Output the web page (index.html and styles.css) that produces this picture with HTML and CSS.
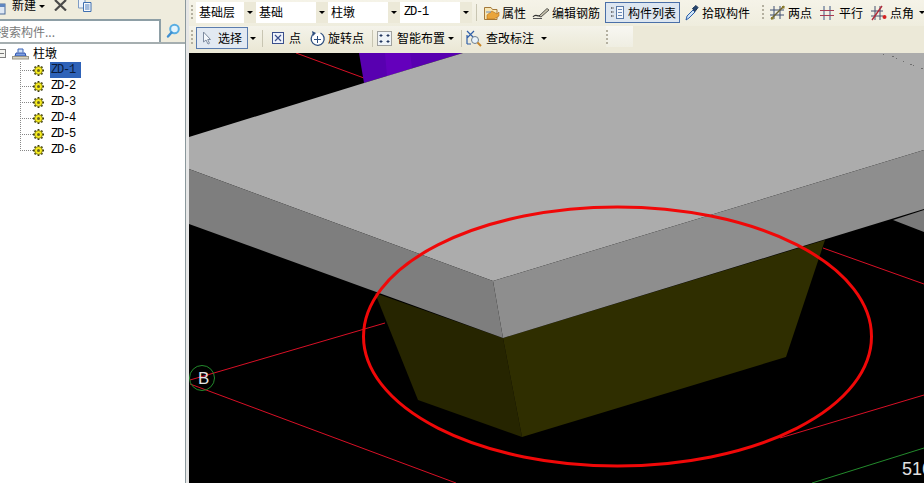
FILE: index.html
```html
<!DOCTYPE html>
<html lang="zh">
<head>
<meta charset="utf-8">
<title>柱墩</title>
<link rel="stylesheet" href="styles.css">
</head>
<body>
<div class="app">
  <aside class="panel">
    <div class="panel-bar">
      <svg class="i-new" width="6" height="12" viewBox="0 0 6 12"><rect x="-6" y="1" width="11" height="10" fill="#dfe8f4" stroke="#4a6a9a"/><rect x="-6" y="1" width="11" height="3" fill="#5f86c0"/></svg>
      <span class="new-label">新建</span>
      <span class="caret caret-new"></span>
      <svg class="i-x" width="13" height="11" viewBox="0 0 13 11"><path d="M1 0L12 10.500M12 0L1 10.500" stroke="#4a4a4a" stroke-width="2.200" fill="none"/></svg>
      <svg class="i-copy" width="15" height="12" viewBox="0 0 15 12"><path d="M1.500 -1H8V8H1.500Z" fill="#eef3fa" stroke="#7f9cc4"/><path d="M6.500 2.500H14V11.500H6.500Z" fill="#f6f9fd" stroke="#3f6fb0"/><path d="M8 5H12.500M8 7H12.500M8 9H12.500" stroke="#4d7dbd"/></svg>
    </div>
    <div class="search">
      <div class="search-input"><span class="search-text">搜索构件...</span></div>
      <div class="search-btn">
        <svg width="15" height="15" viewBox="0 0 15 15"><circle cx="8.500" cy="6" r="4.300" fill="#e4f4fd" stroke="#5aaee2" stroke-width="2"/><path d="M5.500 9.500L2 13.500" stroke="#3f8fd0" stroke-width="2.400" stroke-linecap="round"/></svg>
      </div>
    </div>
    <div class="tree">
      <div class="tree-root">
        <span class="expander"></span>
        <svg class="root-icon" width="17" height="13" viewBox="0 0 17 13"><path d="M6 5.500V2H11V5.500" fill="#cfe0f6" stroke="#3a62b8"/><path d="M4 6H13L14 9H3Z" fill="#7e9fe0" stroke="#2f55ad"/><rect x="0.500" y="9.500" width="16" height="2.500" fill="#d8d4c4" stroke="#9a9686"/></svg>
        <span class="root-label">柱墩</span>
      </div>
      <ul class="tree-list">
        <li class="tree-item"><span class="connector"></span><svg class="gear" viewBox="0 0 11 11"><use href="#gear"/></svg><span class="code code-on">ZD-1</span></li>
        <li class="tree-item"><span class="connector"></span><svg class="gear" viewBox="0 0 11 11"><use href="#gear"/></svg><span class="code">ZD-2</span></li>
        <li class="tree-item"><span class="connector"></span><svg class="gear" viewBox="0 0 11 11"><use href="#gear"/></svg><span class="code">ZD-3</span></li>
        <li class="tree-item"><span class="connector"></span><svg class="gear" viewBox="0 0 11 11"><use href="#gear"/></svg><span class="code">ZD-4</span></li>
        <li class="tree-item"><span class="connector"></span><svg class="gear" viewBox="0 0 11 11"><use href="#gear"/></svg><span class="code">ZD-5</span></li>
        <li class="tree-item"><span class="connector"></span><svg class="gear" viewBox="0 0 11 11"><use href="#gear"/></svg><span class="code">ZD-6</span></li>
      </ul>
    </div>
  </aside>

  <main class="work">
    <div class="toolbars">
      <div class="row row-one">
        <span class="grip grip-first"></span>
        <div class="combo combo-a"><span class="combo-text">基础层</span><span class="combo-arrow"><span class="caret"></span></span></div>
        <div class="combo combo-b"><span class="combo-text">基础</span><span class="combo-arrow"><span class="caret"></span></span></div>
        <div class="combo combo-b"><span class="combo-text">柱墩</span><span class="combo-arrow"><span class="caret"></span></span></div>
        <div class="combo combo-b"><span class="combo-text code-text">ZD-1</span><span class="combo-arrow"><span class="caret"></span></span></div>
        <span class="sep sep-a"></span>
        <div class="tool tool-prop">
          <svg width="17" height="16" viewBox="0 0 17 16"><path d="M1.500 2.500H8L9.500 4.500H14V14.500H1.500Z" fill="#f7e6b4" stroke="#a5793a"/><path d="M4 10L9 6L14 9L16 7V11L11 14H4Z" fill="#eaa53a" stroke="#b3701c" stroke-width=".6"/><path d="M3 7H8" stroke="#6f8fc0"/></svg>
          <span>属性</span>
        </div>
        <div class="tool tool-rebar">
          <svg width="18" height="14" viewBox="0 0 18 14"><path d="M1 11C4 7 6 12 9 9" stroke="#333" fill="none" stroke-width="1.200"/><path d="M7 10L15 2.500L17 4L9 11Z" fill="#c9c4ae" stroke="#333" stroke-width=".8"/><path d="M1 12.500H10" stroke="#555"/></svg>
          <span>编辑钢筋</span>
        </div>
        <div class="tool tool-list">
          <svg width="14" height="15" viewBox="0 0 14 15"><path d="M1 3H4M1 7H4M1 11H4" stroke="#555" stroke-width="1.600" stroke-dasharray="1.500 1"/><rect x="6.500" y="1.500" width="7" height="12" fill="#f4f7fb" stroke="#5a7aa8"/><path d="M8 4.500H12M8 7.500H12M8 10.500H12" stroke="#6a8ab8"/></svg>
          <span>构件列表</span>
        </div>
        <div class="tool tool-pick">
          <svg width="14" height="17" viewBox="0 0 14 17"><path d="M1 16L2 12L8 6L10 8L4 14Z" fill="#cfe4f7" stroke="#2c5ea8"/><path d="M7.500 4.500L11 1.500L13 3.500L10 7.500Z" fill="#27466f" stroke="#1c3454"/></svg>
          <span>拾取构件</span>
        </div>
        <span class="grip grip-mid"></span>
        <div class="tool tool-two">
          <svg width="15" height="15" viewBox="0 0 15 15"><path d="M4 1V14M10 1V14M0 5H14M0 10H14" stroke="#3e4f72"/><path d="M1 14L14 1" stroke="#6d6333" stroke-width="1.400"/><rect x="12" y="1" width="2.500" height="2.500" fill="#8a7a2a"/><rect x="1" y="12" width="2.500" height="2.500" fill="#8a7a2a"/></svg>
          <span>两点</span>
        </div>
        <div class="tool tool-par">
          <svg width="14" height="14" viewBox="0 0 14 14"><path d="M4 0V14M10 0V14" stroke="#3f5684"/><path d="M0 4.500H14M0 9.500H14" stroke="#a83a52"/></svg>
          <span>平行</span>
        </div>
        <div class="tool tool-ang">
          <svg width="16" height="16" viewBox="0 0 16 16"><path d="M4 1V15M9 1V15M0 6H12M0 11H12" stroke="#49506e"/><path d="M1 15L11 1" stroke="#b02a3a" stroke-width="1.400"/><circle cx="13.500" cy="12" r="2" fill="#d42020"/></svg>
          <span>点角</span>
        </div>
        <span class="caret caret-end"></span>
      </div>
      <div class="row row-two">
        <div class="strip">
          <span class="grip grip-first"></span>
          <div class="tool tool-select">
            <svg width="10" height="14" viewBox="0 0 10 14"><path d="M1.500 1V11L4 9L6 13L7.500 12.300L5.700 8.500H8.500Z" fill="#f4f8fc" stroke="#7f8ca0"/></svg>
            <span>选择</span>
          </div>
          <span class="caret caret-sel"></span>
          <span class="sep sep-b"></span>
          <div class="tool tool-point">
            <svg width="12" height="12" viewBox="0 0 12 12"><rect x=".5" y=".5" width="11" height="11" fill="#eef2fa" stroke="#3a4f8c"/><path d="M3 3L9 9M9 3L3 9" stroke="#3a4f8c" stroke-width="1.200"/></svg>
            <span>点</span>
          </div>
          <div class="tool tool-rot">
            <svg width="17" height="17" viewBox="0 0 17 17"><path d="M5 3.500A6.500 6.500 0 1 0 11.500 3" fill="#fff" stroke="#2f4f7f" stroke-width="1.300"/><path d="M3 1L7 3L4 6Z" fill="#2f4f7f"/><path d="M8.500 6V13M5 9.500H12" stroke="#2f4f7f"/></svg>
            <span>旋转点</span>
          </div>
          <span class="sep sep-c"></span>
          <div class="tool tool-smart">
            <svg width="15" height="15" viewBox="0 0 15 15"><rect x=".5" y=".5" width="14" height="14" fill="#eef3f8" stroke="#555" stroke-dasharray="1 1"/><path d="M4 3V6M2.500 4.500H5.500M11 3V6M9.500 4.500H12.500M4 9V12M2.500 10.500H5.500M11 9V12M9.500 10.500H12.500" stroke="#22365f"/></svg>
            <span>智能布置</span>
          </div>
          <span class="caret caret-smart"></span>
          <span class="sep sep-d"></span>
          <div class="tool tool-check">
            <svg width="17" height="17" viewBox="0 0 17 17"><path d="M2 1L9 8M9 1L2 8M2 5V14M2 14H6" stroke="#2f5fa8" stroke-width="1.200" fill="none"/><circle cx="10" cy="10" r="3.500" fill="#e8f3fb" stroke="#6f8090"/><path d="M12.500 12.500L16 16" stroke="#c8862a" stroke-width="2"/></svg>
            <span>查改标注</span>
          </div>
          <span class="caret caret-check"></span>
        </div>
        <div class="overflow"><span class="grip grip-over"></span></div>
      </div>
    </div>
    <svg class="scene" viewBox="189 53 735 430" preserveAspectRatio="none">
      <rect x="189" y="53" width="735" height="430" fill="#000"/>
      <path d="M296 53L364 78" class="red-thin"/>
      <path d="M359 53L364 83L463 53Z" fill="#5800b0"/>
      <path d="M385 53L387 76L412 68L410 53Z" fill="#6400bc"/>
      <path d="M190 380L385 323" class="red-thin"/>
      <path d="M190 384L456 483" class="red-thin"/>
      <path d="M823 248L924 284" class="red-thin"/>
      <path d="M780 438L924 395" class="red-thin"/>
      <path d="M812 483L924 448" class="green-thin"/>
      <circle cx="202" cy="378" r="12.500" class="green-thin"/>
      <path d="M375 293L418 400L522 437L503 338Z" fill="#262500"/>
      <path d="M503 338L522 437L786 357L825 240Z" fill="#2f2e00"/>
      <path d="M893 220L924 210V232Z" fill="#7a7a7a"/>
      <path d="M189 137L364 83L463 53H924V150L493 281L189 169Z" fill="#acacac"/>
      <path d="M189 169L493 281L503 338L189 224Z" fill="#7e7e7e"/>
      <path d="M493 281L924 150V209L503 338Z" fill="#8e8e8e"/>
      <path d="M883 54h1v1h-1zM892 56h2v1h-2zM896 58h1v1h-1zM903 61h1v1h-1zM910 64h2v1h-2zM913 65h1v1h-1zM921 68h2v1h-2z" fill="#6e6e6e"/>
      <ellipse cx="617.500" cy="336.500" rx="254" ry="129.500" class="mark"/>
      <text x="198" y="384" class="axis">B</text>
      <text x="902" y="475" class="coord">516</text>
    </svg>
  </main>
</div>
<svg class="defs" width="0" height="0">
  <symbol id="gear" viewBox="0 0 11 11">
    <path d="M5.500 0V11M0 5.500H11M1.600 1.600L9.400 9.400M9.400 1.600L1.600 9.400" stroke="#3a3a10" stroke-width="1.800"/>
    <circle cx="5.500" cy="5.500" r="3.900" fill="#f6ec20" stroke="#55500a" stroke-width=".6"/>
    <circle cx="5.500" cy="5.500" r="1.500" fill="#6a6420"/>
  </symbol>
</svg>
</body>
</html>
```
FILE: styles.css
```css
* { box-sizing: border-box; }
html, body { margin: 0; height: 100%; overflow: hidden; }
body {
  font: 12px/16px "Noto Sans CJK SC", "Liberation Sans", sans-serif;
  color: #000;
  background: #e6e6e6;
}
svg { display: block; flex: none; }
.defs { position: absolute; }
.app { display: flex; width: 924px; height: 483px; }

/* left panel */
.panel {
  width: 186px;
  flex: none;
  display: flex;
  flex-direction: column;
  border-right: 1px solid #8b989c;
  background: #fff;
  overflow: hidden;
}
.panel-bar {
  height: 19px;
  flex: none;
  display: flex;
  align-items: flex-start;
  background: #efecdd;
}
.i-new { margin-top: 3px; }
.new-label { margin: -3px 0 0 6px; }
.caret {
  display: block;
  flex: none;
  width: 0;
  height: 0;
  border: 3px solid transparent;
  border-top: 3px solid #000;
  border-bottom: 0;
}
.caret-new { margin: 5px 0 0 3px; }
.i-x { margin-left: 9px; }
.i-copy { margin-left: 10px; }
.search {
  height: 25px;
  flex: none;
  display: flex;
  background: #efecdd;
  border-bottom: 2px solid #a5aeb0;
}
.search-input {
  width: 161px;
  height: 23px;
  background: #fff;
  border: 2px solid #8e9fa6;
  border-left: 0;
  border-bottom-width: 0;
  overflow: hidden;
  display: flex;
  align-items: center;
}
.search-text { margin-left: -3px; color: #7a7a7a; white-space: nowrap; }
.search-btn { flex: 1; display: flex; align-items: center; justify-content: center; padding-left: 1px; }
.tree { padding-top: 1px; }
.tree-root { height: 16px; display: flex; align-items: center; margin-bottom: 1px; }
.expander {
  width: 6px;
  height: 9px;
  margin-top: 1px;
  border: 1px solid #808080;
  border-left: 0;
  background: linear-gradient(#777, #777) 0 3px / 4px 1px no-repeat #f4f4f0;
}
.root-icon { margin-left: 6px; }
.root-label { margin-left: 4px; }
.tree-list {
  list-style: none;
  margin: 0 0 0 20px;
  padding: 0;
  background: repeating-linear-gradient(#888 0 1px, transparent 1px 2px) 0 0 / 1px calc(100% - 8px) no-repeat;
}
.tree-item { height: 16px; display: flex; align-items: center; }
.connector {
  width: 13px;
  height: 1px;
  flex: none;
  background: repeating-linear-gradient(90deg, #888 0 1px, transparent 1px 2px);
}
.gear { width: 11px; height: 11px; }
.code {
  margin-left: 6px;
  width: 31px;
  height: 16px;
  padding-left: 1px;
  font: 12px/16px "Liberation Mono", monospace;
  letter-spacing: -1.2px;
  white-space: nowrap;
}
.code-on { background: #2e62b8; color: #0c1c3a; }

/* toolbars */
.work { flex: 1; min-width: 0; display: flex; flex-direction: column; padding-left: 3px; }
.toolbars { height: 53px; flex: none; display: flex; flex-direction: column; background: #ece9d8; }
.row { display: flex; align-items: center; white-space: nowrap; }
.row-one {
  height: 26px;
  padding-bottom: 1px;
  background: linear-gradient(#f5f3e8, #efedde);
}
.row-two { height: 27px; align-items: flex-start; }
.strip {
  width: 417px;
  height: 24px;
  display: flex;
  align-items: center;
  background: linear-gradient(#f4f3ea, #ebe8d6);
}
.overflow { width: 27px; height: 21px; background: linear-gradient(#f8f7f2, #efeee2); }
.grip {
  display: block;
  flex: none;
  width: 2px;
  height: 16px;
  background: repeating-linear-gradient(#b4b0a0 0 2px, transparent 2px 4px);
}
.grip-first { margin-left: 2px; }
.grip-over { margin-top: 4px; }
.grip-mid { margin-left: 12px; }
.sep { display: block; flex: none; width: 1px; height: 17px; background: #c8c5b2; }

.combo { display: flex; height: 21px; flex: none; }
.combo-a { margin-left: 3px; }
.combo-text { background: #fff; padding: 2px 0 0 3px; line-height: 16px; }
.combo-a .combo-text { width: 48px; }
.combo-b .combo-text { width: 60px; }
.code-text { font: 12px/16px "Liberation Mono", monospace; letter-spacing: -1.2px; padding-left: 4px; }
.combo-arrow { width: 12px; display: flex; align-items: center; justify-content: center; background: #ece9d8; }
.sep-a { margin-left: 4px; }

.tool { display: flex; align-items: center; flex: none; height: 21px; }
.tool-prop { margin-left: 6px; gap: 2px; }
.tool-rebar { margin-left: 6px; gap: 2px; }
.tool-list {
  margin-left: 5px;
  width: 75px;
  padding-left: 4px;
  gap: 4px;
  background: #dde6f0;
  border: 1px solid #4a6fa8;
}
.tool-pick { margin-left: 5px; gap: 3px; }
.tool-two { margin-left: 6px; gap: 3px; }
.tool-par { margin-left: 8px; gap: 5px; }
.tool-ang { margin-left: 8px; gap: 3px; }
.caret-end { margin-left: 5px; }

.tool-select {
  margin-left: 3px;
  width: 52px;
  height: 22px;
  padding-left: 5px;
  gap: 6px;
  background: #e2e9f2;
  border: 1px solid #5a7cae;
}
.caret-sel { margin-left: 2px; }
.sep-b { margin-left: 6px; }
.tool-point { margin-left: 9px; gap: 5px; }
.tool-rot { margin-left: 8px; gap: 2px; }
.sep-c { margin-left: 8px; }
.tool-smart { margin-left: 4px; gap: 5px; }
.caret-smart { margin-left: 3px; }
.sep-d { margin-left: 7px; }
.tool-check { margin-left: 3px; gap: 4px; }
.caret-check { margin-left: 7px; }

/* 3D view */
.scene { flex: 1; width: 100%; min-height: 0; }
.red-thin { stroke: #d81026; stroke-width: 1; fill: none; }
.green-thin { stroke: #238a2c; stroke-width: 1; fill: none; }
.mark { fill: none; stroke: #f00808; stroke-width: 3; }
.axis { font: 17px "Liberation Sans", sans-serif; fill: #e4e4e4; }
.coord { font: 18px "Liberation Sans", sans-serif; fill: #e0e0e0; }
```
